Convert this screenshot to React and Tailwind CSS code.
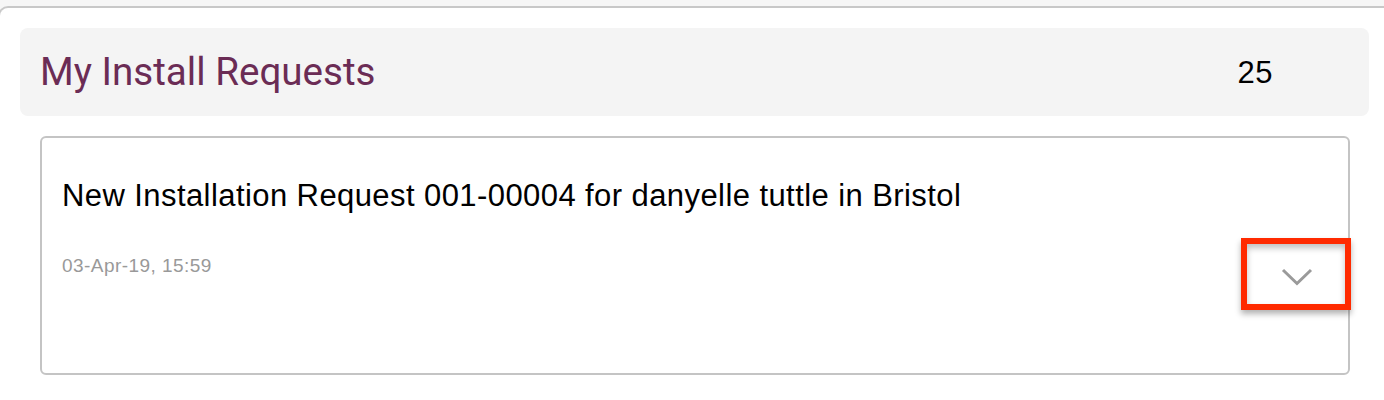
import React from "react";

export default function App() {
  return (
    <div className="relative h-[400px] w-[1384px] overflow-hidden bg-[#f6f6f6] pt-[6px]">
      <div className="-ml-[2px] h-[394px] rounded-tl-[10px] border-l-2 border-t-2 border-[#c8c8c8] bg-white pl-[20px] pr-[15px] pt-[20px]">
        <div className="flex h-[88px] items-center justify-between rounded-[8px] bg-[#f4f4f4] pl-[20px] pr-[96px]">
          <h1
            className="text-[38.6px] leading-none text-[#6b2c55]"
            style={{ fontFamily: "Roboto, 'Noto Sans', sans-serif" }}
          >
            My Install Requests
          </h1>
          <span
            className="text-[31px] leading-none tracking-[0.5px] text-black"
            style={{ fontFamily: "'Liberation Sans', Arial, sans-serif" }}
          >
            25
          </span>
        </div>

        <div
          className="ml-[20px] mr-[19px] mt-[20px] h-[239px] rounded-[6px] border-2 border-[#c4c4c4] bg-white pl-[20px] pt-[42px]"
          style={{ fontFamily: "'Liberation Sans', Arial, sans-serif" }}
        >
          <div className="text-[31px] leading-[31px] tracking-[0.42px] text-black">
            New Installation Request 001-00004 for danyelle tuttle in Bristol
          </div>
          <div className="mt-[45px] flex items-start justify-between">
            <span className="text-[19px] leading-none tracking-[0.45px] text-[#999999]">
              03-Apr-19, 15:59
            </span>
            <div className="mr-[35px] mt-[12px]">
              <svg width="32" height="18" viewBox="0 0 32 18" fill="none">
                <polyline
                  points="2,2 16,15.5 30,2"
                  stroke="#9a9a9a"
                  strokeWidth="3"
                  fill="none"
                />
              </svg>
            </div>
          </div>
        </div>
      </div>

      <div className="absolute left-[1241px] top-[238px] h-[72px] w-[110px] border-[6px] border-[#ff2a00] shadow-[0_4px_6px_rgba(0,0,0,0.3),inset_0_4px_6px_rgba(0,0,0,0.25)]" />
    </div>
  );
}
